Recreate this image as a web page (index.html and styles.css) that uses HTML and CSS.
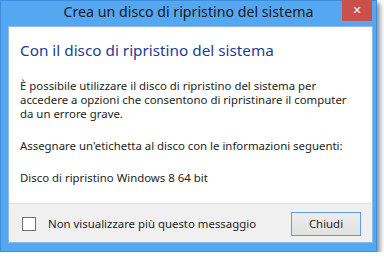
FILE: index.html
```html
<!DOCTYPE html>
<html lang="it">
<head>
  <meta charset="UTF-8">
  <title>Crea un disco di ripristino del sistema</title>
  <link rel="stylesheet" href="styles.css">
</head>
<body>
  <div class="window">
    <div class="title-bar">
      <span class="title">Crea un disco di ripristino del sistema</span>
      <button class="close-btn" aria-label="Chiudi">&#x2715;</button>
    </div>

    <div class="client">
      <div class="content">
        <h1>Con il disco di ripristino del sistema</h1>
        <p>È possibile utilizzare il disco di ripristino del sistema per<br>accedere a opzioni che consentono di ripristinare il computer<br>da un errore grave.</p>
        <p>Assegnare un'etichetta al disco con le informazioni seguenti:</p>
        <p>Disco di ripristino Windows 8 64 bit</p>
      </div>

      <div class="footer">
        <label class="check">
          <span class="box"></span>
          Non visualizzare più questo messaggio
        </label>
        <button class="btn">Chiudi</button>
      </div>
    </div>
  </div>
</body>
</html>
```

FILE: styles.css
```css
:root {
  --frame: #55a7f1;
  --frame-edge: #3d8ee0;
  --text: #1e1e1e;
  --heading: #1c3d95;
}

body {
  margin: 0;
  background: #fff;
  font-family: 'Noto Sans', 'Open Sans', sans-serif;
  color: var(--text);
}

.window {
  width: 375px;
  height: 250px;
  background: var(--frame);
  border: 1px solid var(--frame-edge);
  box-shadow: 3px 3px 5px rgba(0, 0, 0, 0.45);
  display: flex;
  flex-direction: column;
}

.title-bar {
  height: 31px;
  position: relative;
  display: flex;
  justify-content: center;
  align-items: center;
}

.title {
  font-size: 14.2px;
  color: #1a1a1a;
  padding-bottom: 4px;
}

.close-btn {
  position: absolute;
  top: -1px;
  right: 4px;
  width: 30px;
  height: 21px;
  border: none;
  padding: 0;
  background: #c9504b;
  color: #fff;
  font-size: 11px;
  font-family: 'DejaVu Sans', sans-serif;
  font-weight: bold;
}

.client {
  margin: 0 3px 8px 7px;
  flex: 1;
  background: #fff;
  border: 1px solid #8fbbe8;
  display: flex;
  flex-direction: column;
}

.content {
  flex: 1;
  padding: 13px 11px 0;
}

h1 {
  margin: 0 0 19px;
  font-size: 15.3px;
  line-height: 20px;
  font-weight: normal;
  color: var(--heading);
}

p {
  margin: 0 0 18px;
  font-size: 11.4px;
  line-height: 14px;
}

.footer {
  height: 37px;
  background: #f0f0f0;
  border-top: 1px solid #dfdfdf;
  display: flex;
  align-items: center;
  justify-content: space-between;
  padding: 1px 11px 0 13px;
}

.check {
  display: flex;
  align-items: center;
  gap: 12px;
  font-size: 11.4px;
}

.box {
  width: 12px;
  height: 12px;
  border: 1px solid #707070;
  background: #fff;
}

.btn {
  width: 70px;
  height: 24px;
  background: linear-gradient(#ececec, #e2e2e2);
  border: 1px solid #5d9fe0;
  font-family: inherit;
  font-size: 11.4px;
  color: var(--text);
  padding: 0;
}
```
